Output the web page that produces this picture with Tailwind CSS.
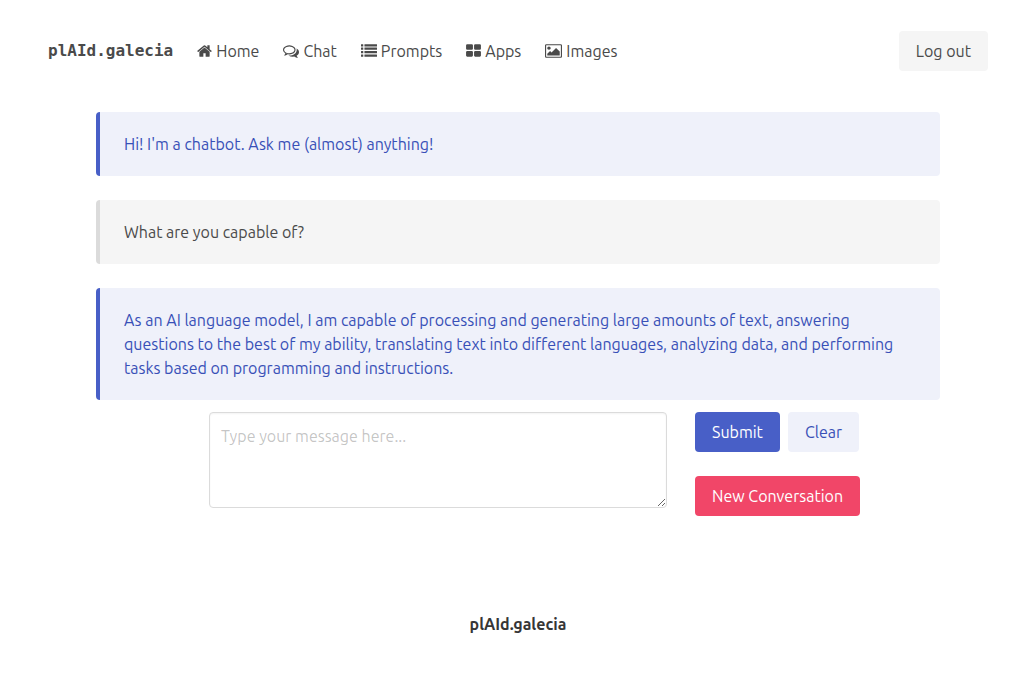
<!DOCTYPE html>
<html lang="en">
<head>
    <meta charset="UTF-8">
    <meta name="viewport" content="width=device-width, initial-scale=1.0">
    <title>plAId.galecia</title>
    <script src="https://cdn.jsdelivr.net/npm/@tailwindcss/browser@4"></script>
</head>
<body class="bg-white min-h-screen pl-12 pr-[33px] font-['Ubuntu','Noto_Sans',sans-serif] text-base text-[#4a4a4a] [text-rendering:optimizeLegibility]">
    <!-- Navbar -->
    <header class="flex items-center pt-[31px]">
        <a href="#" class="mr-6 font-['DejaVu_Sans_Mono',monospace] font-bold">plAId.galecia</a>
        <nav class="flex items-center gap-6">
            <a href="#" class="flex items-center gap-1">
                <svg class="h-4 w-[15px]" viewBox="64 0 1664 1792" fill="currentColor" aria-hidden="true"><path d="M1472 992v480q0 26-19 45t-45 19h-384v-384h-256v384h-384q-26 0-45-19t-19-45v-480q0-1 .5-3t.5-3l575-474 575 474q1 2 1 6zm223-69l-62 74q-8 9-21 11h-3q-13 0-21-7l-692-577-692 577q-12 8-24 7-13-2-21-11l-62-74q-8-10-7-23.5t11-21.5l719-599q32-26 76-26t76 26l244 204v-195q0-14 9-23t23-9h192q14 0 23 9t9 23v408l219 182q10 8 11 21.5t-7 23.5z"/></svg>
                Home
            </a>
            <a href="#" class="flex items-center gap-1">
                <svg class="size-4" viewBox="0 0 1792 1792" fill="currentColor" aria-hidden="true"><path d="M704 384q-153 0-286 52t-211.5 141-78.5 191q0 82 53 158t149 132l97 56-35 84q34-20 62-39l44-31 53 10q78 14 153 14 153 0 286-52t211.5-141 78.5-191-78.5-191-211.5-141-286-52zm0-128q191 0 353.5 68.5t256.5 186.5 94 257-94 257-256.5 186.5-353.5 68.5q-86 0-176-16-124 88-278 128-36 9-86 16h-3q-11 0-20.5-8t-11.5-21q-1-3-1-6.5t.5-6.5 2-6l2.5-5 3.5-5.5 4-5 4.5-5 4-4.5q5-6 23-25t26-29.5 22.5-29 25-38.5 20.5-44q-124-72-195-177t-71-224q0-139 94-257t256.5-186.5 353.5-68.5zm822 1169q10 24 20.5 44t25 38.5 22.5 29 26 29.5 23 25q1 1 4 4.5t4.5 5 4 5 3.5 5.5l2.5 5 2 6 .5 6.5-1 6.5q-3 14-13 22t-22 7q-50-7-86-16-154-40-278-128-90 16-176 16-271 0-472-132 58 4 88 4 161 0 309-45t264-129q125-92 192-212t67-254q0-77-23-152 129 71 204 178t75 230q0 120-71 224.5t-195 176.5z"/></svg>
                Chat
            </a>
            <a href="#" class="flex items-center gap-1">
                <svg class="size-4" viewBox="0 0 1792 1792" fill="currentColor" aria-hidden="true">
                    <rect x="0" y="128" width="256" height="256" rx="32"/><rect x="384" y="128" width="1408" height="256" rx="32"/>
                    <rect x="0" y="512" width="256" height="256" rx="32"/><rect x="384" y="512" width="1408" height="256" rx="32"/>
                    <rect x="0" y="896" width="256" height="256" rx="32"/><rect x="384" y="896" width="1408" height="256" rx="32"/>
                    <rect x="0" y="1280" width="256" height="256" rx="32"/><rect x="384" y="1280" width="1408" height="256" rx="32"/>
                </svg>
                Prompts
            </a>
            <a href="#" class="flex items-center gap-1">
                <svg class="h-4 w-[15px]" viewBox="64 0 1664 1792" fill="currentColor" aria-hidden="true">
                    <rect x="64" y="128" width="768" height="640" rx="128"/><rect x="960" y="128" width="768" height="640" rx="128"/>
                    <rect x="64" y="896" width="768" height="640" rx="128"/><rect x="960" y="896" width="768" height="640" rx="128"/>
                </svg>
                Apps
            </a>
            <a href="#" class="flex items-center gap-1">
                <svg class="h-4 w-[17px]" viewBox="0 0 1920 1792" fill="currentColor" aria-hidden="true"><path d="M640 576q0 80-56 136t-136 56-136-56-56-136 56-136 136-56 136 56 56 136zm1024 384v448h-1408v-192l320-320 160 160 512-512zm96-704h-1600q-13 0-22.5 9.5t-9.5 22.5v1216q0 13 9.5 22.5t22.5 9.5h1600q13 0 22.5-9.5t9.5-22.5v-1216q0-13-9.5-22.5t-22.5-9.5zm160 32v1216q0 66-47 113t-113 47h-1600q-66 0-113-47t-47-113v-1216q0-66 47-113t113-47h1600q66 0 113 47t47 113z"/></svg>
                Images
            </a>
        </nav>
        <button type="button" class="ml-auto h-10 rounded bg-[#f5f5f5] px-[17px]">Log out</button>
    </header>

    <main class="px-12 pt-[41px]">
        <!-- Conversation -->
        <div class="space-y-6">
            <article class="rounded border-l-4 border-[#485fc7] bg-[#eff1fa] px-6 py-5 text-[#3850b7]">Hi! I'm a chatbot. Ask me (almost) anything!</article>
            <article class="rounded border-l-4 border-[#dbdbdb] bg-[#f5f5f5] px-6 py-5">What are you capable of?</article>
            <article class="rounded border-l-4 border-[#485fc7] bg-[#eff1fa] px-6 py-5 text-[#3850b7]">As an AI language model, I am capable of processing and generating large amounts of text, answering questions to the best of my ability, translating text into different languages, analyzing data, and performing tasks based on programming and instructions.</article>
        </div>

        <!-- Message form -->
        <form class="mt-3 flex items-start gap-7 pl-[113px]">
            <textarea aria-label="Message" placeholder="Type your message here..." class="h-24 min-w-0 flex-1 resize-y rounded border border-[#dbdbdb] p-[11px] shadow-[inset_0_1px_2px_rgba(10,10,10,0.05)] placeholder:text-[#363636]/30"></textarea>
            <div class="w-[245px]">
                <div class="flex gap-2">
                    <button type="submit" class="h-10 rounded bg-[#485fc7] px-[17px] text-white">Submit</button>
                    <button type="reset" class="h-10 rounded bg-[#eff1fa] px-[17px] text-[#3850b7]">Clear</button>
                </div>
                <button type="button" class="mt-6 h-10 rounded bg-[#f14668] px-[17px] text-white">New Conversation</button>
            </div>
        </form>
    </main>

    <footer class="pt-24 pb-12 text-center font-bold text-[#363636]">plAId.galecia</footer>
</body>
</html>
